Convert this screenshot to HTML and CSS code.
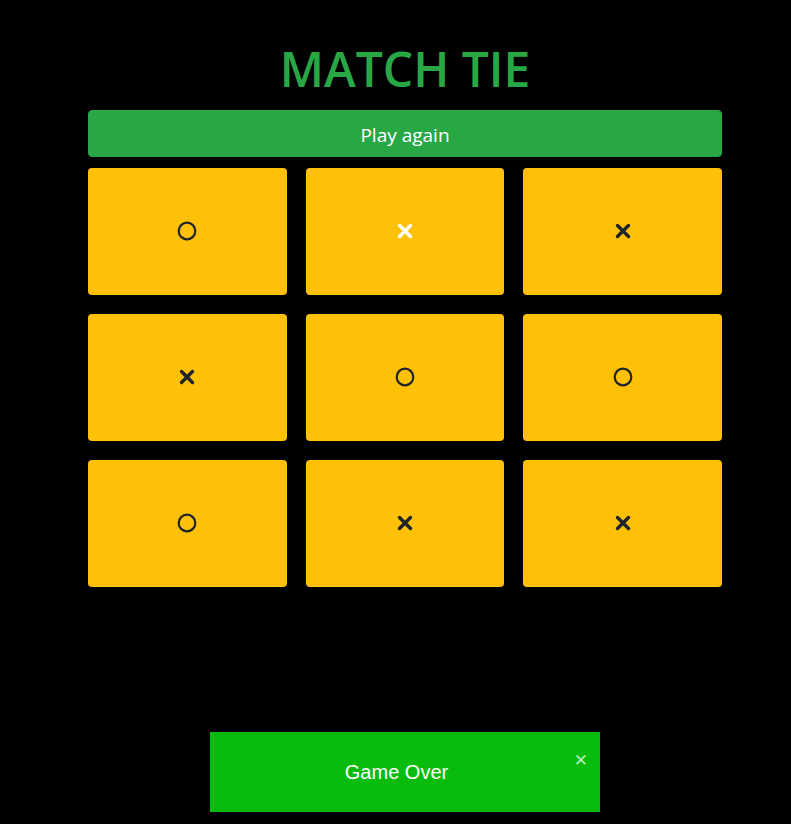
FILE: index.html
```html
<!DOCTYPE html>
<html lang="en">
<head>
<meta charset="utf-8">
<title>Tic Tac Toe</title>
<link rel="stylesheet" href="styles.css">
</head>
<body>
<main class="game">
  <h1 class="title">MATCH TIE</h1>
  <button class="play-again">Play again</button>
  <div class="board">
    <div class="cell"><svg class="mark" viewBox="0 0 20 20"><circle cx="10" cy="10" r="8.3" fill="none" stroke="#212529" stroke-width="2.2"/></svg></div>
    <div class="cell"><svg class="mark" viewBox="0 0 20 20"><path d="M4.5 4.5 L15.5 15.5 M15.5 4.5 L4.5 15.5" stroke="#ffffff" stroke-width="3.4" stroke-linecap="round"/></svg></div>
    <div class="cell"><svg class="mark" viewBox="0 0 20 20"><path d="M4.5 4.5 L15.5 15.5 M15.5 4.5 L4.5 15.5" stroke="#212529" stroke-width="3.4" stroke-linecap="round"/></svg></div>
    <div class="cell"><svg class="mark" viewBox="0 0 20 20"><path d="M4.5 4.5 L15.5 15.5 M15.5 4.5 L4.5 15.5" stroke="#212529" stroke-width="3.4" stroke-linecap="round"/></svg></div>
    <div class="cell"><svg class="mark" viewBox="0 0 20 20"><circle cx="10" cy="10" r="8.3" fill="none" stroke="#212529" stroke-width="2.2"/></svg></div>
    <div class="cell"><svg class="mark" viewBox="0 0 20 20"><circle cx="10" cy="10" r="8.3" fill="none" stroke="#212529" stroke-width="2.2"/></svg></div>
    <div class="cell"><svg class="mark" viewBox="0 0 20 20"><circle cx="10" cy="10" r="8.3" fill="none" stroke="#212529" stroke-width="2.2"/></svg></div>
    <div class="cell"><svg class="mark" viewBox="0 0 20 20"><path d="M4.5 4.5 L15.5 15.5 M15.5 4.5 L4.5 15.5" stroke="#212529" stroke-width="3.4" stroke-linecap="round"/></svg></div>
    <div class="cell"><svg class="mark" viewBox="0 0 20 20"><path d="M4.5 4.5 L15.5 15.5 M15.5 4.5 L4.5 15.5" stroke="#212529" stroke-width="3.4" stroke-linecap="round"/></svg></div>
  </div>
</main>
<div class="toast">
  <span class="toast-text">Game Over</span>
  <span class="toast-close">✕</span>
</div>
</body>
</html>
```
FILE: styles.css
```css
html, body {
  margin: 0;
  padding: 0;
  background: #000;
  height: 100%;
}
body {
  font-family: "Open Sans", "Noto Sans", sans-serif;
}
.game {
  width: 634px;
  margin-left: 88px;
  padding-top: 40px;
  display: flex;
  flex-direction: column;
}
.title {
  margin: 0 0 12px 0;
  text-align: center;
  color: #28a745;
  font-size: 48px;
  font-weight: 600;
  line-height: 57.6px;
  letter-spacing: 0;
}
.play-again {
  height: 47px;
  border: 1px solid #28a745;
  background: #28a745;
  color: #fff;
  font-family: "Open Sans", "Noto Sans", sans-serif;
  font-size: 19px;
  border-radius: 4px;
  padding: 3px 0 0 0;
  cursor: pointer;
}
.board {
  margin-top: 11px;
  display: grid;
  grid-template-columns: repeat(3, 1fr);
  grid-auto-rows: 127px;
  column-gap: 19px;
  row-gap: 19px;
}
.cell {
  background: #ffc107;
  border-radius: 4px;
  display: flex;
  align-items: center;
  justify-content: center;
}
.mark {
  width: 20px;
  height: 20px;
}
.toast {
  position: fixed;
  left: 210px;
  bottom: 12px;
  width: 390px;
  height: 80px;
  background: #07bc0c;
  box-sizing: border-box;
  display: flex;
  align-items: center;
  justify-content: center;
  padding-right: 17px;
}
.toast-text {
  font-family: "Liberation Sans", Arial, sans-serif;
  font-size: 20px;
  color: #fff;
}
.toast-close {
  position: absolute;
  top: 20px;
  right: 12px;
  font-family: "DejaVu Sans", sans-serif;
  font-size: 17px;
  font-weight: bold;
  color: rgba(255,255,255,0.7);
  line-height: 1;
}
```
